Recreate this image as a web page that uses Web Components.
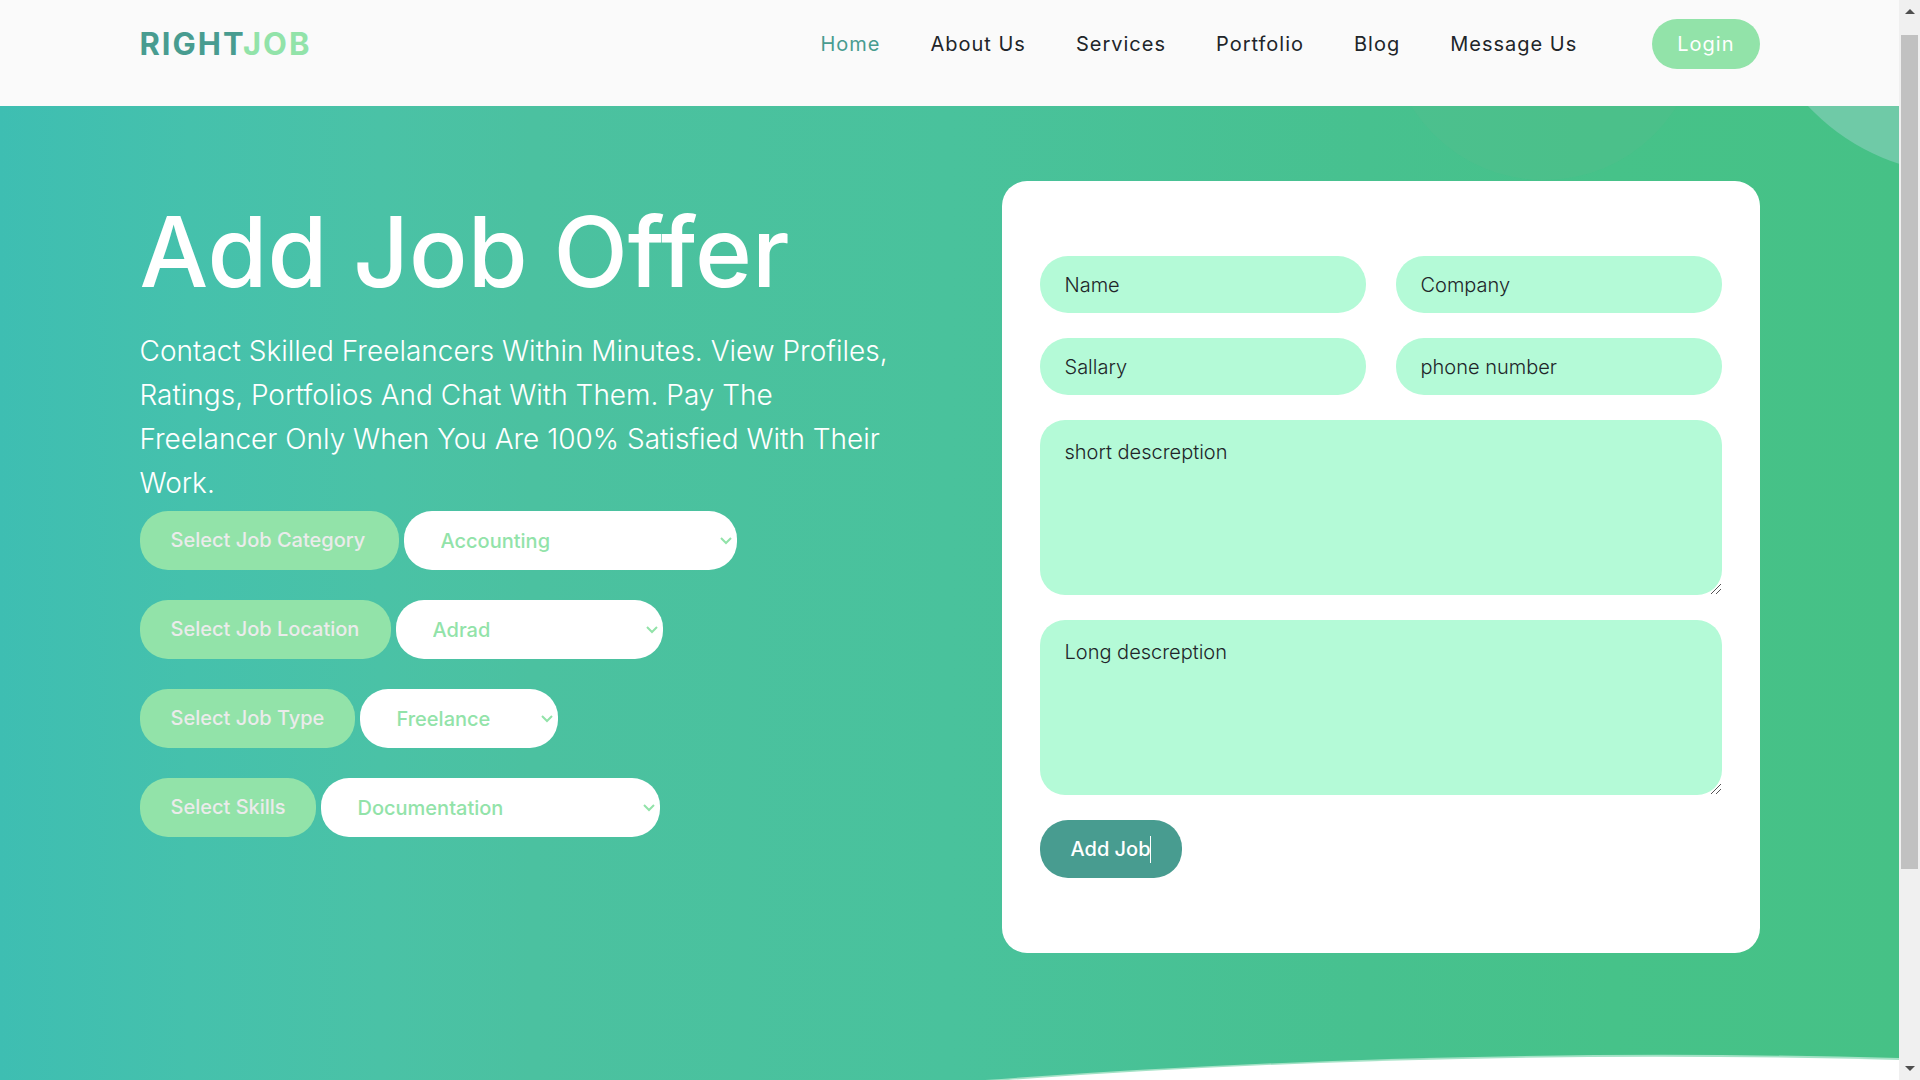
<!DOCTYPE html>
<html lang="en">
<head>
<meta charset="utf-8">
<title>RightJob – Add Job Offer</title>
<style>
  html, body { margin: 0; height: 100%; }
  body {
    font-family: Inter, "Open Sans", sans-serif;
    overflow: hidden;
    --teal: #489c90;
    --mint: #92e3a9;
    --field: #b4fad7;
    --ink: #212529;
  }
</style>
</head>
<body>
<app-shell>
  <site-header>
    <nav-link href="#home" current>Home</nav-link>
    <nav-link href="#about">About Us</nav-link>
    <nav-link href="#services">Services</nav-link>
    <nav-link href="#portfolio">Portfolio</nav-link>
    <nav-link href="#blog">Blog</nav-link>
    <nav-link href="#message">Message Us</nav-link>
  </site-header>
  <hero-section>
    <offer-intro slot="intro">
      <span slot="title">Add Job Offer</span>
      <span slot="text">Contact Skilled Freelancers Within Minutes. View Profiles, Ratings, Portfolios And Chat With Them. Pay The Freelancer Only When You Are 100% Satisfied With Their Work.</span>
      <select-field label="Select Job Category" options="Accounting,Design,Marketing" style="--label:259px;--select:333px"></select-field>
      <select-field label="Select Job Location" options="Adrad,Algiers,Oran" style="--label:251px;--select:267px"></select-field>
      <select-field label="Select Job Type" options="Freelance,Full time,Part time" style="--label:215px;--select:198px"></select-field>
      <select-field label="Select Skills" options="Documentation,Writing,Testing" style="--label:176px;--select:339px"></select-field>
    </offer-intro>
    <offer-form slot="form">
      <text-field label="Name"></text-field>
      <text-field label="Company"></text-field>
      <text-field label="Sallary"></text-field>
      <text-field label="phone number"></text-field>
      <text-field label="short descreption" multiline></text-field>
      <text-field label="Long descreption" multiline></text-field>
    </offer-form>
  </hero-section>
</app-shell>

<script>
const define = (name, html, setup) => {
  const template = document.createElement('template');
  template.innerHTML = html;
  customElements.define(name, class extends HTMLElement {
    constructor() {
      super();
      this.attachShadow({ mode: 'open' }).append(template.content.cloneNode(true));
    }
    connectedCallback() { if (setup) setup(this, this.shadowRoot); }
  });
};

define('app-shell', `
  <style>
    :host { display: flex; height: 100vh; overflow: hidden; }
    main { flex: 1; min-width: 0; display: flex; flex-direction: column; }
  </style>
  <main><slot></slot></main>
  <scroll-rail></scroll-rail>`);

define('scroll-rail', `
  <style>
    :host { display: flex; flex-direction: column; align-items: center; width: 21px; background: #f0f0f0; }
    svg { display: block; padding: 9px 0; }
    .track { flex: 1; display: flex; flex-direction: column; align-self: stretch; padding: 12px 2px 0; }
    .thumb { height: 81.6%; background: #c1c1c1; }
  </style>
  <svg width="10" height="5" viewBox="0 0 10 5"><path d="M0 5 5 0l5 5z" fill="#4f4f4f"/></svg>
  <div class="track"><div class="thumb"></div></div>
  <svg width="10" height="5" viewBox="0 0 10 5"><path d="M0 0h10L5 5z" fill="#4f4f4f"/></svg>`);

define('site-header', `
  <style>
    :host { display: block; background: #fafafa; }
    .bar { display: flex; align-items: center; max-width: 1620px; margin: 0 auto; padding: 19px 0 37px; }
    .logo { color: var(--teal); font-size: 31px; font-weight: 700; line-height: 50px; letter-spacing: 2px; text-decoration: none; }
    .logo span { color: var(--mint); }
    nav { display: flex; gap: 50px; margin-left: auto; }
    .login { margin-left: 75px; padding: 0 25px; border-radius: 25px; background: var(--mint); color: #fff;
      font-size: 20px; line-height: 50px; letter-spacing: 1px; text-decoration: none; }
  </style>
  <div class="bar">
    <a class="logo" href="#home">RIGHT<span>JOB</span></a>
    <nav><slot></slot></nav>
    <a class="login" href="#login">Login</a>
  </div>`);

define('nav-link', `
  <style>
    :host { display: block; }
    a { color: var(--ink); font-size: 20px; line-height: 50px; letter-spacing: 1px; text-decoration: none; }
    :host([current]) a { color: var(--teal); }
  </style>
  <a><slot></slot></a>`, (el, root) => { root.querySelector('a').href = el.getAttribute('href'); });

define('hero-section', `
  <style>
    :host { display: block; flex: 1; position: relative; overflow: hidden;
      background: linear-gradient(90deg, #3ebeb2 0, #45c1ac 10%, #4ac2a6 20%, #4bc1a0 28%, #49c29c 50%, #47c18f 72%, #46c289 85%, #46c186 100%); }
    svg { position: absolute; inset: 0; width: 100%; height: 100%; }
    .row { position: relative; display: flex; justify-content: space-between; align-items: flex-start;
      max-width: 1620px; margin: 0 auto; padding-top: 75px; }
    slot[name=intro] { display: block; width: 48%; }
    slot[name=form] { display: block; width: 758px; }
  </style>
  <svg viewBox="0 0 1899 974" preserveAspectRatio="none" aria-hidden="true">
    <circle cx="1544" cy="-82" r="156" fill="#6bb98e" opacity=".16"/>
    <circle cx="1964" cy="-145" r="213" fill="#6fcaa7"/>
    <path d="M985 974Q1450 940 1899 952V974z" fill="#a4e2c6"/>
    <path d="M1008 974Q1450 942 1899 954V974z" fill="#fff"/>
  </svg>
  <div class="row"><slot name="intro"></slot><slot name="form"></slot></div>`);

define('offer-intro', `
  <style>
    :host { display: block; color: #fff; padding-top: 16px; }
    h1 { margin: 0 0 22px; font-size: 97px; font-weight: 500; line-height: 110px; }
    p { margin: 0 0 6px; font-size: 28px; font-weight: 300; line-height: 44px; }
    .choices { display: flex; flex-direction: column; gap: 30px; }
  </style>
  <h1><slot name="title"></slot></h1>
  <p><slot name="text"></slot></p>
  <div class="choices"><slot></slot></div>`);

define('select-field', `
  <style>
    :host { display: flex; gap: 5px; font-size: 20px; font-weight: 500; }
    label, select { box-sizing: border-box; height: 59px; border-radius: 28px; }
    label { width: var(--label); padding-left: 31px; line-height: 59px; white-space: nowrap; background: var(--mint); color: #ebebeb; }
    .box { position: relative; width: var(--select); }
    select { appearance: none; width: 100%; padding: 0 37px; border: 0; background: #fff; color: var(--mint); font: inherit; }
    svg { position: absolute; right: 5px; top: 26px; pointer-events: none; }
  </style>
  <label for="choice"></label>
  <div class="box">
    <select id="choice"></select>
    <svg width="12" height="8" viewBox="0 0 12 8" aria-hidden="true"><path d="M1 1l5 5 5-5" fill="none" stroke="#92e3a9" stroke-width="2"/></svg>
  </div>`, (el, root) => {
  root.querySelector('label').textContent = el.getAttribute('label');
  root.querySelector('select').replaceChildren(
    ...el.getAttribute('options').split(',').map(name => new Option(name)));
});

define('offer-form', `
  <style>
    :host { display: block; }
    form { display: grid; grid-template-columns: 1fr 1fr; gap: 25px 30px; padding: 75px 38px; border-radius: 25px; background: #fff; }
    button { position: relative; justify-self: start; height: 58px; padding: 0 31px; border: 0; border-radius: 28px;
      background: var(--teal); color: #fff; font: 500 20px/58px Inter, "Open Sans", sans-serif; }
    .caret { position: absolute; top: 16px; right: 31px; width: 1px; height: 27px; background: #fff; }
  </style>
  <form>
    <slot></slot>
    <button type="button">Add Job<span class="caret"></span></button>
  </form>`);

define('text-field', `
  <style>
    :host { display: block; position: relative; }
    :host([multiline]) { grid-column: 1 / -1; }
    input, textarea { display: block; box-sizing: border-box; width: 100%; border: 0; border-radius: 28px;
      background: var(--field); color: var(--ink); font: 300 20px/24px Inter, "Open Sans", sans-serif; padding: 0 25px; }
    input { height: 57px; }
    textarea { height: 175px; padding: 20px 25px; border-radius: 25px; resize: none; }
    ::placeholder { color: var(--ink); opacity: 1; }
    svg { position: absolute; right: 0; bottom: 0; display: none; }
    :host([multiline]) svg { display: block; }
  </style>
  <svg width="12" height="12" viewBox="0 0 12 12" aria-hidden="true"><path d="M1 11 11 1M6 11l5-5" stroke="#555" stroke-width="1"/></svg>`, (el, root) => {
  const box = document.createElement(el.hasAttribute('multiline') ? 'textarea' : 'input');
  box.placeholder = el.getAttribute('label');
  box.setAttribute('aria-label', el.getAttribute('label'));
  root.querySelector('svg').before(box);
});
</script>
</body>
</html>
